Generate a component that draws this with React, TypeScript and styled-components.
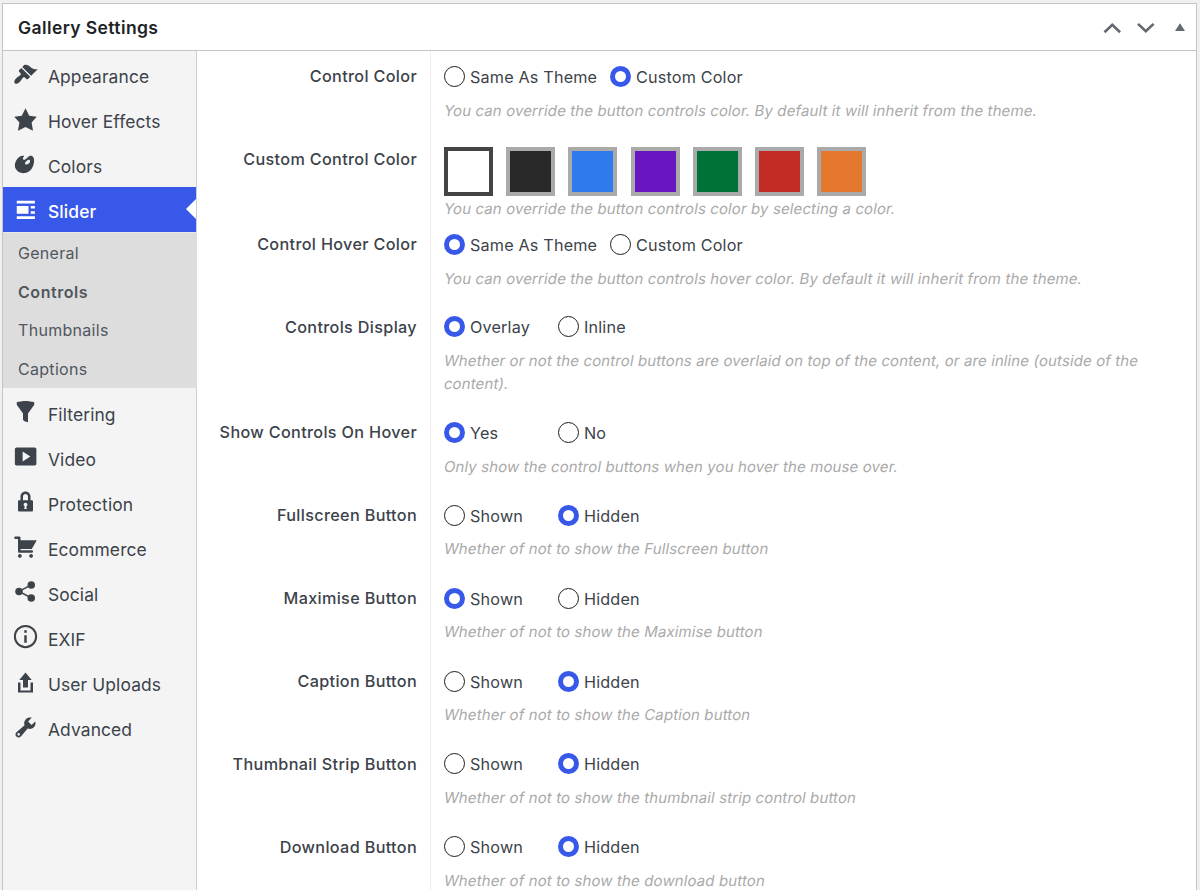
import React, { useState } from "react";
import styled, { createGlobalStyle, css } from "styled-components";

const GlobalStyle = createGlobalStyle`
  * { box-sizing: border-box; }
  body {
    margin: 0;
    background: #f0f0f1;
    font-family: Inter, "Liberation Sans", sans-serif;
    color: #3c434a;
    overflow: hidden;
  }
`;

const Page = styled.div`
  height: 890px;
  padding: 3px 3px 0 2px;
  overflow: hidden;
`;

const Panel = styled.section`
  display: flex;
  flex-direction: column;
  height: 900px;
  background: #fff;
  border: 1px solid #c3c4c7;
`;

const PanelHeader = styled.header`
  display: flex;
  align-items: center;
  flex: none;
  height: 47px;
  padding: 2px 9px 0 15px;
  border-bottom: 1px solid #c3c4c7;
`;

const Title = styled.h2`
  flex: 1;
  margin: 0;
  font-size: 17.5px;
  font-weight: 600;
  letter-spacing: 0.4px;
  line-height: 24px;
  color: #1d2327;
`;

const HeaderActions = styled.div`
  display: flex;
  align-items: center;
  color: #646970;
  svg { display: block; }
`;

const PanelBody = styled.div`
  display: flex;
  flex: 1;
  min-height: 0;
`;

const Sidebar = styled.nav`
  flex: none;
  width: 194px;
  background: #f4f4f4;
  border-right: 1px solid #ccd0d4;
  padding-top: 0.5px;
`;

const MenuItem = styled.a<{ $active?: boolean }>`
  position: relative;
  display: flex;
  align-items: center;
  height: 45.1px;
  padding-left: 10.2px;
  font-size: 17.4px;
  letter-spacing: 0.12px;
  line-height: 24px;
  color: #3c434a;
  cursor: pointer;
  ${(p) =>
    p.$active &&
    css`
      background: #3858e9;
      color: #fff;
      font-weight: 500;
      &::after {
        content: "";
        position: absolute;
        right: 0;
        top: 12px;
        border: 10px solid transparent;
        border-left: 0;
        border-right: 10px solid #fff;
      }
    `}
`;

const MenuIcon = styled.svg`
  flex: none;
  width: 25px;
  height: 25px;
  margin: 0 9.8px 0 0;
  fill: currentColor;
`;

const MenuText = styled.span`
  padding-top: 6px;
`;

const SubMenu = styled.div`
  margin-right: -1px;
  background: #ddd;
  height: 156.6px;
  border-top: 1px solid #e8e8ea;
  margin-bottom: 0.5px;
`;

const SubItem = styled.a<{ $current?: boolean }>`
  display: block;
  height: 38.8px;
  padding-left: 15px;
  font-size: 16px;
  line-height: 40px;
  letter-spacing: ${(p) => (p.$current ? 0.55 : 0.3)}px;
  font-weight: ${(p) => (p.$current ? 600 : 400)};
  color: #50575e;
  cursor: pointer;
`;

const Settings = styled.div`
  flex: 1;
  min-width: 0;
`;

const Row = styled.div<{ $height: number }>`
  display: grid;
  grid-template-columns: 234px 1fr;
  height: ${(p) => p.$height}px;
`;

const RowLabel = styled.div`
  padding: 13.4px 13px 0 0;
  border-right: 1px solid #eee;
  text-align: right;
  font-size: 16.2px;
  font-weight: 500;
  letter-spacing: 0.34px;
  line-height: 24px;
`;

const RowContent = styled.div<{ $swatches?: boolean }>`
  padding: ${(p) => (p.$swatches ? 13 : 13.4)}px 30px 0 13px;
`;

const RadioGroup = styled.div`
  display: flex;
  height: 24px;
`;

const RadioLabel = styled.label<{ $width: number }>`
  display: flex;
  align-items: center;
  width: ${(p) => p.$width}px;
  font-size: 16.2px;
  letter-spacing: 0.17px;
  line-height: 24px;
  white-space: nowrap;
  cursor: pointer;
`;

const RadioText = styled.span`
  padding-top: 1px;
`;

const Radio = styled.input`
  appearance: none;
  flex: none;
  width: 21px;
  height: 21px;
  margin: 0 5px 0 0;
  border: 1px solid #1e1e1e;
  border-radius: 50%;
  background: #fff;
  &:checked {
    border: 5.5px solid #3858e9;
  }
`;

const Description = styled.p<{ $tight?: boolean }>`
  margin: ${(p) => (p.$tight ? 2 : 11.2)}px 0 0;
  font-size: 15px;
  letter-spacing: 0.115px;
  line-height: 22.6px;
  color: #aaa;
`;

/* Slants the upright face so that the letter shapes stay two-storey. */
const SlantedLine = styled.span`
  display: block;
  width: max-content;
  transform: skewX(-10deg);
`;

const Swatches = styled.div`
  display: flex;
  gap: 13.2px;
`;

const Swatch = styled.button<{ $color: string; $selected: boolean }>`
  width: 49px;
  height: 49px;
  padding: 0;
  border: 4px solid ${(p) => (p.$selected ? "#444" : "#aaa")};
  background: ${(p) => p.$color};
`;

const icons: Record<string, React.ReactNode> = {
  Appearance: (
    <path d="M14.48 11.06L7.41 3.99l1.5-1.5c.5-.56 2.3-.47 3.51.32 1.21.8 1.43 1.28 2.91 2.1 1.18.64 2.45 1.26 4.45.85zm-.71.71L6.7 4.7 4.93 6.47c-.39.39-.39 1.02 0 1.41l1.06 1.06c.39.39.39 1.03 0 1.42-.6.6-1.43 1.11-2.21 1.69-.35.26-.7.53-1.01.84C1.43 14.23.4 16.08 1.4 17.07c.99 1 2.84-.03 4.18-1.36.31-.31.58-.66.85-1.02.57-.78 1.08-1.61 1.69-2.21.39-.39 1.02-.39 1.41 0l1.06 1.06c.39.39 1.02.39 1.41 0z" />
  ),
  "Hover Effects": <path d="M10 1l3 6 6 .75-4.12 4.62L16 19l-6-3-6 3 1.13-6.63L1 7.75 7 7z" />,
  Colors: (
    <path d="M8.55 3.06c1.01.34-1.95 2.01-.1 3.13 1.04.63 3.31-2.22 4.45-2.86.97-.54 2.67-.65 3.53 1.23 1.09 2.38.14 8.57-3.79 11.06-3.97 2.5-8.97 1.23-10.7-2.66-2.01-4.53 3.12-11.09 6.61-9.9zm1.21 6.45c.73 1.64 4.7-.5 3.79-2.8-.59-1.49-4.48 1.25-3.79 2.8z" />
  ),
  Slider: <path d="M3 3h14.5v2.1H3zM3 7.2h9.4v6.1H3zM14.2 7.2h3.3v2h-3.3zM14.2 11.3h3.3v2h-3.3zM3 15.4h14.5v2.1H3z" />,
  Filtering: (
    <path d="M3 4.5v-2s3.34-1 7-1 7 1 7 1v2l-5 7.03v6.97s-1.22-.09-2.25-.59S8 16.5 8 16.5v-4.97z" />
  ),
  Video: (
    <path d="M18.7 15.8V4.2c0-.8-.6-1.4-1.4-1.4H2.9c-.8 0-1.4.6-1.4 1.4v11.6c0 .8.6 1.4 1.4 1.4h14.4c.8 0 1.4-.6 1.4-1.4zM7.7 14V6l6.2 4z" />
  ),
  Protection: (
    <path d="M14 9h1c.55 0 1 .45 1 1v7c0 .55-.45 1-1 1H5c-.55 0-1-.45-1-1v-7c0-.55.45-1 1-1h1V6c0-2.21 1.79-4 4-4s4 1.79 4 4v3zm-2 0V6c0-1.1-.9-2-2-2s-2 .9-2 2v3h4zm-1 7l-.36-2.15c.51-.24.86-.75.86-1.35 0-.83-.67-1.5-1.5-1.5s-1.5.67-1.5 1.5c0 .6.35 1.11.86 1.35L9 16h2z" />
  ),
  Ecommerce: (
    <path d="M6 13h9c.55 0 1 .45 1 1s-.45 1-1 1H5c-.55 0-1-.45-1-1V4H2c-.55 0-1-.45-1-1s.45-1 1-1h3c.55 0 1 .45 1 1v2h13l-4 7H6v1zm-.5 3c.83 0 1.5.67 1.5 1.5S6.33 19 5.5 19 4 18.33 4 17.5 4.67 16 5.5 16zm9 0c.83 0 1.5.67 1.5 1.5s-.67 1.5-1.5 1.5-1.5-.67-1.5-1.5.67-1.5 1.5-1.5z" />
  ),
  Social: (
    <>
      <circle cx="14.6" cy="4.7" r="3" />
      <circle cx="14.6" cy="15.1" r="3" />
      <circle cx="4.8" cy="9.9" r="3" />
      <path d="M14.6 4.7L4.8 9.9l9.8 5.2" fill="none" stroke="currentColor" strokeWidth="1.3" />
    </>
  ),
  EXIF: (
    <>
      <circle cx="10" cy="10" r="8.5" fill="none" stroke="currentColor" strokeWidth="1.6" />
      <path d="M9 5h2v2H9zM9 9h2v6H9z" />
    </>
  ),
  "User Uploads": <path d="M8 14V8H5l5-6 5 6h-3v6H8zm6 2.3V10h2v8H4v-8h2v6.3z" />,
  Advanced: (
    <path d="M16.68 9.77c-1.34 1.34-3.3 1.67-4.95.99l-5.41 6.52c-.99.99-2.59.99-3.58 0s-.99-2.59 0-3.57l6.52-5.42c-.68-1.65-.35-3.61.99-4.95 1.28-1.28 3.12-1.62 4.72-1.06l-2.89 2.89 2.82 2.82 2.86-2.87c.53 1.58.18 3.39-1.08 4.65zM3.81 16.21c.4.39 1.04.39 1.43 0 .4-.4.4-1.04 0-1.43-.39-.4-1.03-.4-1.43 0-.39.39-.39 1.03 0 1.43z" />
  ),
};

const menu = Object.keys(icons);
const subMenu = ["General", "Controls", "Thumbnails", "Captions"];
const swatchColors = ["#fff", "#282828", "#2f7aec", "#6816c0", "#007239", "#c32b25", "#e5782f"];

type Setting = {
  label: string;
  height: number;
  options?: string[];
  optionWidth?: number;
  selected: number;
  text: string[];
};

const settings: Setting[] = [
  { label: "Control Color", height: 83, options: ["Same As Theme", "Custom Color"], optionWidth: 166, selected: 1, text: ["You can override the button controls color. By default it will inherit from the theme."] },
  { label: "Custom Control Color", height: 85, selected: 0, text: ["You can override the button controls color by selecting a color."] },
  { label: "Control Hover Color", height: 82.5, options: ["Same As Theme", "Custom Color"], optionWidth: 166, selected: 0, text: ["You can override the button controls hover color. By default it will inherit from the theme."] },
  { label: "Controls Display", height: 105.5, options: ["Overlay", "Inline"], selected: 0, text: ["Whether or not the control buttons are overlaid on top of the content, or are inline (outside of the", "content)."] },
  { label: "Show Controls On Hover", height: 82.9, options: ["Yes", "No"], selected: 0, text: ["Only show the control buttons when you hover the mouse over."] },
  { label: "Fullscreen Button", height: 82.9, options: ["Shown", "Hidden"], selected: 1, text: ["Whether of not to show the Fullscreen button"] },
  { label: "Maximise Button", height: 82.9, options: ["Shown", "Hidden"], selected: 0, text: ["Whether of not to show the Maximise button"] },
  { label: "Caption Button", height: 82.9, options: ["Shown", "Hidden"], selected: 1, text: ["Whether of not to show the Caption button"] },
  { label: "Thumbnail Strip Button", height: 82.9, options: ["Shown", "Hidden"], selected: 1, text: ["Whether of not to show the thumbnail strip control button"] },
  { label: "Download Button", height: 82.9, options: ["Shown", "Hidden"], selected: 1, text: ["Whether of not to show the download button"] },
];

function SettingRow({ setting }: { setting: Setting }) {
  const [selected, setSelected] = useState(setting.selected);
  return (
    <Row $height={setting.height}>
      <RowLabel>{setting.label}</RowLabel>
      <RowContent $swatches={!setting.options}>
        {setting.options ? (
          <RadioGroup>
            {setting.options.map((option, i) => (
              <RadioLabel key={option} $width={setting.optionWidth ?? 114}>
                <Radio type="radio" name={setting.label} checked={selected === i} onChange={() => setSelected(i)} />
                <RadioText>{option}</RadioText>
              </RadioLabel>
            ))}
          </RadioGroup>
        ) : (
          <Swatches>
            {swatchColors.map((color, i) => (
              <Swatch key={color} $color={color} $selected={selected === i} onClick={() => setSelected(i)} />
            ))}
          </Swatches>
        )}
        <Description $tight={!setting.options}>
          {setting.text.map((line) => (
            <SlantedLine key={line}>{line}</SlantedLine>
          ))}
        </Description>
      </RowContent>
    </Row>
  );
}

export default function App() {
  return (
    <>
      <GlobalStyle />
      <Page>
        <Panel>
          <PanelHeader>
            <Title>Gallery Settings</Title>
            <HeaderActions>
              <svg width="87" height="24" viewBox="0 0 87 24" fill="none" stroke="currentColor" strokeWidth="2.6">
                <path d="M4.5 16.3L12.3 8.9L20.1 16.3" />
                <path d="M38 7.9L45.8 15.3L53.6 7.9" />
                <path d="M75 15L80 7.2L85 15z" fill="currentColor" stroke="none" />
              </svg>
            </HeaderActions>
          </PanelHeader>
          <PanelBody>
            <Sidebar>
              {menu.map((name) => (
                <React.Fragment key={name}>
                  <MenuItem $active={name === "Slider"}>
                    <MenuIcon viewBox="0 0 20 20">{icons[name]}</MenuIcon>
                    <MenuText>{name}</MenuText>
                  </MenuItem>
                  {name === "Slider" && (
                    <SubMenu>
                      {subMenu.map((item) => (
                        <SubItem key={item} $current={item === "Controls"}>{item}</SubItem>
                      ))}
                    </SubMenu>
                  )}
                </React.Fragment>
              ))}
            </Sidebar>
            <Settings>
              {settings.map((s) => (
                <SettingRow key={s.label} setting={s} />
              ))}
            </Settings>
          </PanelBody>
        </Panel>
      </Page>
    </>
  );
}
